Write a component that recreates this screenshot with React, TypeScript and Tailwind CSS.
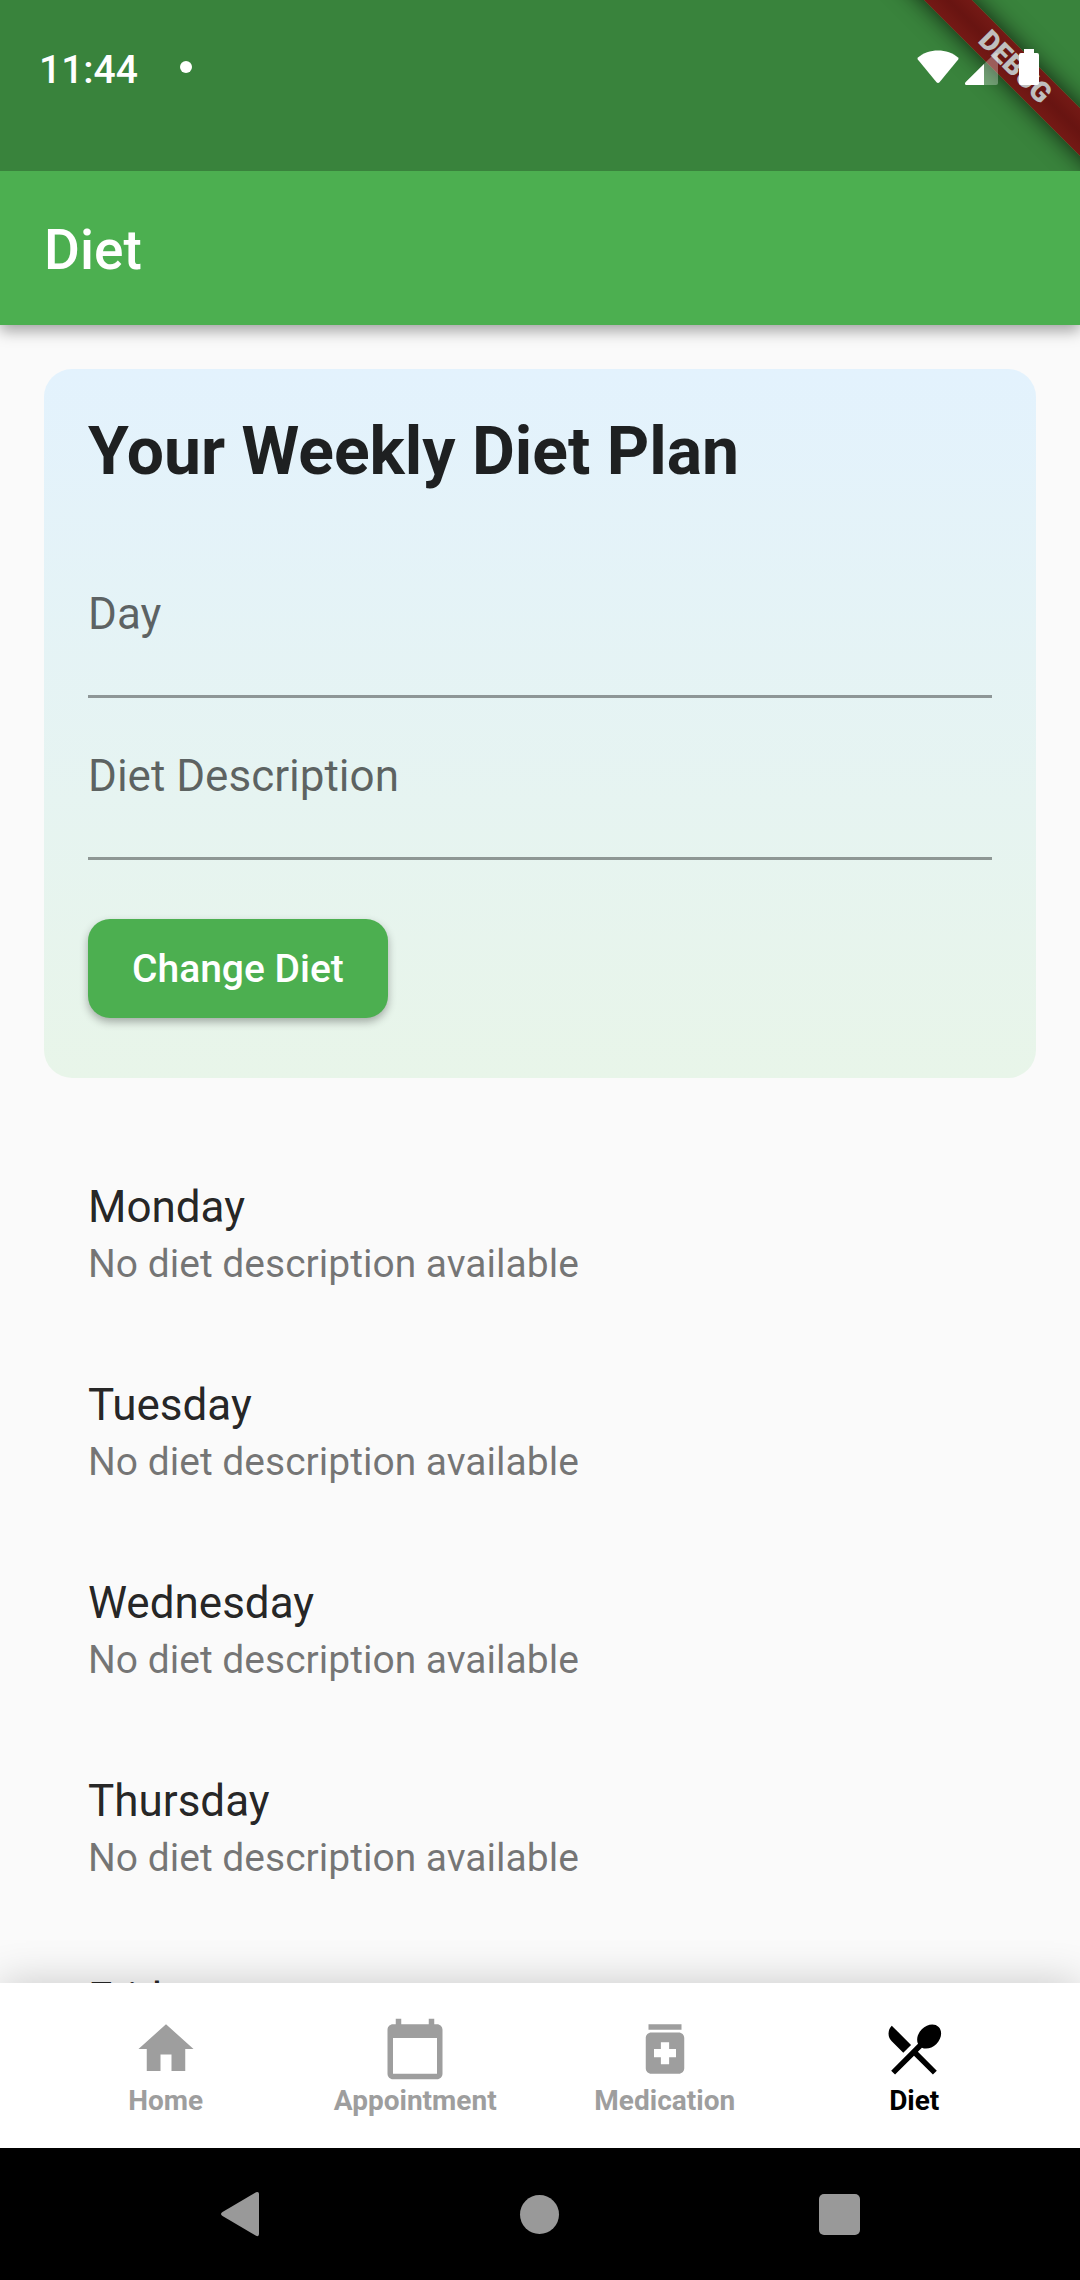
import { useState } from "react";
import { MdCalendarToday, MdHome, MdLocalDining, MdMedication } from "react-icons/md";

const days = ["Monday", "Tuesday", "Wednesday", "Thursday", "Friday", "Saturday", "Sunday"];

const tabs = [
  { label: "Home", Icon: MdHome },
  { label: "Appointment", Icon: MdCalendarToday },
  { label: "Medication", Icon: MdMedication },
  { label: "Diet", Icon: MdLocalDining },
];

function DebugBanner() {
  return (
    <div className="pointer-events-none absolute top-0 right-0 h-[171px] w-[220px] overflow-hidden">
      <div className="absolute top-[50px] -right-[85px] flex h-[34px] w-[300px] rotate-45 items-center justify-center bg-linear-to-b from-[#9c231d] via-[#8b1b17] to-[#9c231d] text-[28px] leading-none font-black text-white shadow-[0_0_24px_rgba(0,0,0,0.75)]">
        DEBUG
      </div>
    </div>
  );
}

function StatusBar() {
  return (
    <div className="relative flex h-[171px] items-start justify-between bg-black/25 pt-[46px] pr-[41px] pl-[39px] text-white">
      <div className="flex h-12 items-center gap-[42px]">
        <span className="text-[39px] leading-[46px] font-medium">11:44</span>
        <span className="mb-1.5 size-3 rounded-full bg-white" />
      </div>
      <div className="flex h-[46px] items-start">
        <svg className="h-[46px] w-[42px]" viewBox="0 0 42 46" fill="currentColor" aria-label="Wi-Fi">
          <path d="M1 11.5C6 7 13.500 4.500 21 4.500S36 7 41 11.500q1 1 .2 2L22.500 36.300q-1.500 1.600-3 0L.8 13.500Q0 12.500 1 11.500Z" />
        </svg>
        <svg className="ml-1.5 h-[46px] w-[33px]" viewBox="0 0 33 46" fill="currentColor" aria-label="Mobile signal">
          <path d="M1 39Q-1 38 .8 36L29 8q4-3 4 1.500V37q0 2-2 2Z" fillOpacity="0.3" />
          <path d="M1 39Q-1 38 .8 36L19 18v21Z" />
        </svg>
        <svg className="ml-[21px] h-[46px] w-5" viewBox="0 0 20 46" fill="currentColor" aria-label="Battery">
          <path d="M5 3h10v4h3q2 0 2 2v28q0 2-2 2H2q-2 0-2-2V9q0-2 2-2h3Z" />
        </svg>
      </div>
    </div>
  );
}

function Field({ id, label }: { id: string; label: string }) {
  return (
    <div className="flex flex-col">
      <label htmlFor={id} className="text-[44px] leading-[52px] text-black/60">
        {label}
      </label>
      <input
        id={id}
        type="text"
        className="h-[58px] w-full border-b-[3px] border-black/38 bg-transparent text-[44px] leading-[52px] text-black/87 outline-none"
      />
    </div>
  );
}

export default function App() {
  const [active, setActive] = useState("Diet");

  return (
    <div className="flex h-screen flex-col overflow-hidden bg-[#fafafa] font-[Roboto,sans-serif]">
      <header className="relative z-10 bg-[#4caf50] shadow-[0_6px_14px_rgba(0,0,0,0.35)]">
        <DebugBanner />
        <StatusBar />
        <div className="flex h-[154px] items-center px-11 pt-1">
          <h1 className="text-[55px] leading-[64px] font-medium text-white">Diet</h1>
        </div>
      </header>

      <main className="min-h-0 flex-1 overflow-y-auto [scrollbar-width:none]">
        <form
          className="m-11 mb-0 rounded-[28px] bg-linear-to-b from-[#e3f2fd] to-[#e8f5e9] px-11 pt-11 pb-[60px]"
          onSubmit={(event) => event.preventDefault()}
        >
          <h2 className="text-[66px] leading-[77px] font-bold text-black/87">Your Weekly Diet Plan</h2>
          <div className="mt-[98px] flex flex-col gap-[52px]">
            <Field id="day" label="Day" />
            <Field id="diet-description" label="Diet Description" />
          </div>
          <button
            type="submit"
            className="mt-[59px] h-[99px] rounded-[22px] bg-[#4caf50] px-11 text-[39px] leading-[46px] font-medium text-white shadow-[0_4px_8px_rgba(0,0,0,0.3)]"
          >
            Change Diet
          </button>
        </form>

        <ul className="mt-[103px] flex flex-col gap-[92px] px-[88px] pb-11">
          {days.map((day) => (
            <li key={day} className="flex flex-col gap-2">
              <span className="text-[44px] leading-[52px] text-black/87">{day}</span>
              <span className="text-[39px] leading-[46px] text-black/54">No diet description available</span>
            </li>
          ))}
        </ul>
      </main>

      <nav className="relative grid h-[165px] shrink-0 grid-cols-4 bg-white px-[41px] shadow-[0_0_40px_rgba(0,0,0,0.2)]">
        {tabs.map(({ label, Icon }) => (
          <button
            key={label}
            type="button"
            aria-current={active === label ? "page" : undefined}
            onClick={() => setActive(label)}
            className={`flex flex-col items-center pt-[33px] ${active === label ? "text-black" : "text-[#9e9e9e]"}`}
          >
            <Icon className="size-[66px]" />
            <span className="text-[28px] leading-[38px] font-bold">{label}</span>
          </button>
        ))}
      </nav>

      <div className="grid h-[132px] shrink-0 grid-cols-3 bg-black px-[91px] text-[#999]">
        <button type="button" aria-label="Back" className="flex items-center justify-center">
          <svg className="size-12" viewBox="0 0 48 48" fill="currentColor">
            <path d="M5.500 22 39 2.200q3-1 3 1.800v40q0 3-3 1.800L5.500 26q-3-2 0-4Z" />
          </svg>
        </button>
        <button type="button" aria-label="Home screen" className="flex items-center justify-center">
          <span className="size-[39px] rounded-full bg-current" />
        </button>
        <button type="button" aria-label="Recent apps" className="flex items-center justify-center">
          <span className="size-[41px] rounded-[5px] bg-current" />
        </button>
      </div>
    </div>
  );
}
